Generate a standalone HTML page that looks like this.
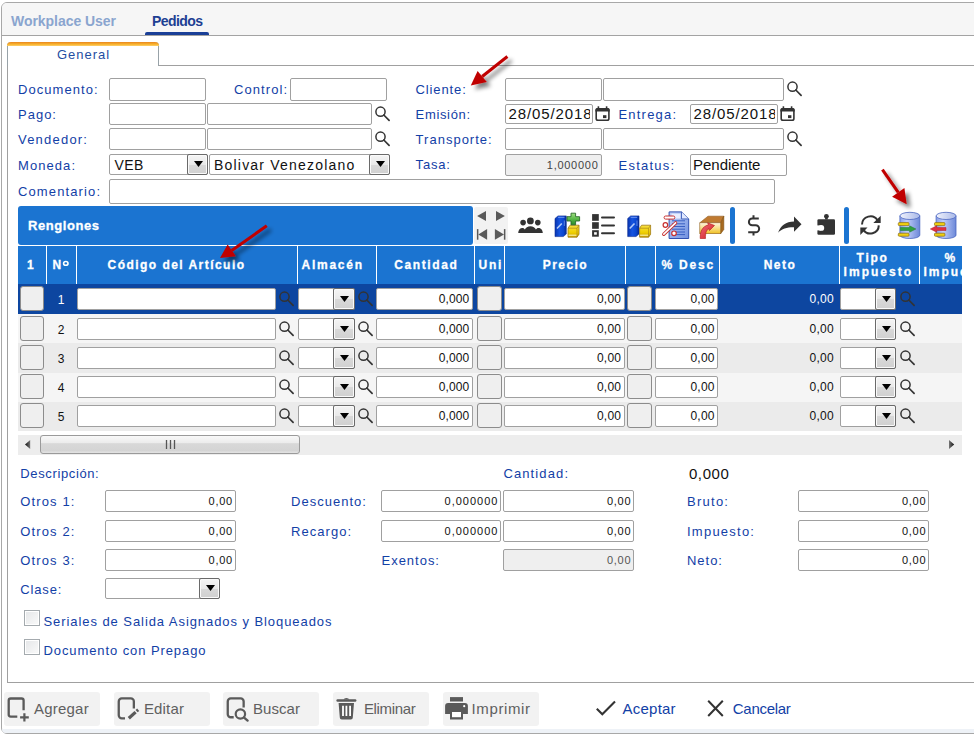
<!DOCTYPE html>
<html><head><meta charset="utf-8"><style>
html,body{margin:0;padding:0;width:974px;height:735px;overflow:hidden;background:#fff;font-family:"Liberation Sans",sans-serif}
.a{position:absolute}
.t{position:absolute;white-space:nowrap;line-height:20px}
.dd{box-sizing:border-box;border:1px solid #6a6a6a;border-radius:2px;box-shadow:inset 0 0 0 1px #fafafa;background:linear-gradient(#f4f4f4 0%,#e9e9e9 50%,#d8d8d8 52%,#d0d0d0 100%)}
</style></head><body>
<div class="a" style="left:1px;top:2px;width:1000px;height:732px;border:1px solid #a8a8a8;border-radius:6px;box-sizing:border-box;background:#fff"></div>
<div class="a" style="left:2px;top:3px;width:980px;height:32px;background:#f6f6f6;border-top-left-radius:5px"></div>
<div class="a" style="left:2px;top:35px;width:980px;height:1px;background:#a3a3a3"></div>
<div class="t" style="left:11.00px;top:11px;font-size:14px;color:#8aa5cf;letter-spacing:-0.046px;font-weight:bold;">Workplace User</div>
<div class="t" style="left:152.00px;top:11px;font-size:14px;color:#1d3f93;letter-spacing:-0.583px;font-weight:bold;">Pedidos</div>
<div class="a" style="left:145px;top:32px;width:64px;height:3px;background:#1a3f97;border-radius:2px 2px 0 0"></div>
<div class="a" style="left:7px;top:65px;width:1000px;height:618px;border-left:1px solid #a0a0a0;border-bottom:1px solid #a0a0a0;box-sizing:border-box"></div>
<div class="a" style="left:158px;top:65px;width:1000px;height:1px;background:#a0a0a0"></div>
<div class="a" style="left:7px;top:42px;width:152px;height:24px;border-left:1px solid #98a2a8;border-right:1px solid #98a2a8;box-sizing:border-box;background:#fff;border-radius:4px 4px 0 0"></div>
<div class="a" style="left:7px;top:42px;width:152px;height:4px;background:linear-gradient(#e8861e,#f9b530 60%,#fcd070);border-radius:4px 4px 0 0"></div>
<div class="t" style="left:57.00px;top:45px;font-size:13px;color:#1f4ea2;letter-spacing:0.967px;">General</div>
<div class="t" style="left:18.00px;top:80px;font-size:13px;color:#1240a6;letter-spacing:1.056px;">Documento:</div>
<div class="t" style="left:18.00px;top:105px;font-size:13px;color:#1240a6;letter-spacing:1.000px;">Pago:</div>
<div class="t" style="left:18.00px;top:130px;font-size:13px;color:#1240a6;letter-spacing:1.213px;">Vendedor:</div>
<div class="t" style="left:18.00px;top:156px;font-size:13px;color:#1240a6;letter-spacing:1.067px;">Moneda:</div>
<div class="t" style="left:18.00px;top:182px;font-size:13px;color:#1240a6;letter-spacing:1.120px;">Comentario:</div>
<div class="t" style="left:234.00px;top:80px;font-size:13px;color:#1240a6;letter-spacing:1.071px;">Control:</div>
<div class="t" style="left:415.60px;top:80px;font-size:13px;color:#1240a6;letter-spacing:0.871px;">Cliente:</div>
<div class="t" style="left:415.60px;top:105px;font-size:13px;color:#1240a6;letter-spacing:0.657px;">Emisión:</div>
<div class="t" style="left:415.60px;top:130px;font-size:13px;color:#1240a6;letter-spacing:1.010px;">Transporte:</div>
<div class="t" style="left:415.60px;top:155px;font-size:13px;color:#1240a6;letter-spacing:0.800px;">Tasa:</div>
<div class="t" style="left:618.50px;top:105px;font-size:13px;color:#1240a6;letter-spacing:1.200px;">Entrega:</div>
<div class="t" style="left:618.50px;top:156px;font-size:13px;color:#1240a6;letter-spacing:1.243px;">Estatus:</div>
<div class="a" style="left:109px;top:78px;width:97px;height:23px;border:1px solid #a0a0a0;border-radius:2px;background:#fff;box-sizing:border-box"></div>
<div class="a" style="left:290px;top:78px;width:97px;height:23px;border:1px solid #a0a0a0;border-radius:2px;background:#fff;box-sizing:border-box"></div>
<div class="a" style="left:109px;top:103px;width:97px;height:22px;border:1px solid #a0a0a0;border-radius:2px;background:#fff;box-sizing:border-box"></div>
<div class="a" style="left:207px;top:103px;width:165px;height:22px;border:1px solid #a0a0a0;border-radius:2px;background:#fff;box-sizing:border-box"></div>
<div class="a" style="left:374px;top:105px;width:18px;height:18px"><svg width="18" height="18" viewBox="0 0 18 18"><circle cx="6.5" cy="6.7" r="4.6" fill="none" stroke="#333" stroke-width="1.5"/><path d="M9.8 10L15.1 15.3" stroke="#333" stroke-width="1.7" stroke-linecap="round"/></svg></div>
<div class="a" style="left:109px;top:128px;width:97px;height:22px;border:1px solid #a0a0a0;border-radius:2px;background:#fff;box-sizing:border-box"></div>
<div class="a" style="left:207px;top:128px;width:165px;height:22px;border:1px solid #a0a0a0;border-radius:2px;background:#fff;box-sizing:border-box"></div>
<div class="a" style="left:374px;top:130px;width:18px;height:18px"><svg width="18" height="18" viewBox="0 0 18 18"><circle cx="6.5" cy="6.7" r="4.6" fill="none" stroke="#333" stroke-width="1.5"/><path d="M9.8 10L15.1 15.3" stroke="#333" stroke-width="1.7" stroke-linecap="round"/></svg></div>
<div class="a" style="left:109px;top:154px;width:99px;height:21px;border:1px solid #a0a0a0;border-radius:2px;background:#fff;box-sizing:border-box"></div>
<div class="a dd" style="left:187px;top:154px;width:21px;height:21px"><svg width="9" height="6" style="position:absolute;left:6px;top:6px"><path d="M0 0H9L4.5 6Z" fill="#000"/></svg></div>
<div class="a" style="left:209px;top:154px;width:181px;height:21px;border:1px solid #a0a0a0;border-radius:2px;background:#fff;box-sizing:border-box"></div>
<div class="a dd" style="left:369px;top:154px;width:21px;height:21px"><svg width="9" height="6" style="position:absolute;left:6px;top:6px"><path d="M0 0H9L4.5 6Z" fill="#000"/></svg></div>
<div class="t" style="left:114.60px;top:155px;font-size:14px;color:#111;letter-spacing:0.400px;">VEB</div>
<div class="t" style="left:214.00px;top:155px;font-size:14px;color:#111;letter-spacing:1.206px;">Bolivar Venezolano</div>
<div class="a" style="left:109px;top:179px;width:666px;height:25px;border:1px solid #a0a0a0;border-radius:2px;background:#fff;box-sizing:border-box"></div>
<div class="a" style="left:505px;top:78px;width:97px;height:23px;border:1px solid #a0a0a0;border-radius:2px;background:#fff;box-sizing:border-box"></div>
<div class="a" style="left:603px;top:78px;width:181px;height:23px;border:1px solid #a0a0a0;border-radius:2px;background:#fff;box-sizing:border-box"></div>
<div class="a" style="left:786px;top:80px;width:18px;height:18px"><svg width="18" height="18" viewBox="0 0 18 18"><circle cx="6.5" cy="6.7" r="4.6" fill="none" stroke="#333" stroke-width="1.5"/><path d="M9.8 10L15.1 15.3" stroke="#333" stroke-width="1.7" stroke-linecap="round"/></svg></div>
<div class="a" style="left:505px;top:104px;width:88px;height:20px;border:1px solid #a0a0a0;border-radius:2px;background:#fff;box-sizing:border-box"></div>
<div class="a" style="left:595px;top:106px"><svg width="16" height="17" viewBox="0 0 16 17"><rect x="1.2" y="2.8" width="12.7" height="11.5" rx="1.8" fill="none" stroke="#333" stroke-width="1.6"/><path d="M0.4 5.6V3.8A1.8 1.8 0 0 1 2.2 2H12.9A1.8 1.8 0 0 1 14.7 3.8V5.6Z" fill="#333"/><rect x="2.6" y="0.3" width="1.6" height="2" fill="#333"/><rect x="10.8" y="0.3" width="1.6" height="2" fill="#333"/><rect x="8" y="9.2" width="3.4" height="2.9" fill="#333"/></svg></div>
<div class="a" style="left:690px;top:104px;width:88px;height:20px;border:1px solid #a0a0a0;border-radius:2px;background:#fff;box-sizing:border-box"></div>
<div class="a" style="left:780px;top:106px"><svg width="16" height="17" viewBox="0 0 16 17"><rect x="1.2" y="2.8" width="12.7" height="11.5" rx="1.8" fill="none" stroke="#333" stroke-width="1.6"/><path d="M0.4 5.6V3.8A1.8 1.8 0 0 1 2.2 2H12.9A1.8 1.8 0 0 1 14.7 3.8V5.6Z" fill="#333"/><rect x="2.6" y="0.3" width="1.6" height="2" fill="#333"/><rect x="10.8" y="0.3" width="1.6" height="2" fill="#333"/><rect x="8" y="9.2" width="3.4" height="2.9" fill="#333"/></svg></div>
<div class="a" style="left:506px;top:105px;width:84px;height:18px;overflow:hidden">
<div class="t" style="left:2.60px;top:-1px;font-size:15px;color:#111;letter-spacing:0.878px;">28/05/2018</div>
</div>
<div class="a" style="left:691px;top:105px;width:84px;height:18px;overflow:hidden">
<div class="t" style="left:2.60px;top:-1px;font-size:15px;color:#111;letter-spacing:0.878px;">28/05/2018</div>
</div>
<div class="a" style="left:505px;top:128px;width:97px;height:22px;border:1px solid #a0a0a0;border-radius:2px;background:#fff;box-sizing:border-box"></div>
<div class="a" style="left:603px;top:128px;width:181px;height:22px;border:1px solid #a0a0a0;border-radius:2px;background:#fff;box-sizing:border-box"></div>
<div class="a" style="left:786px;top:130px;width:18px;height:18px"><svg width="18" height="18" viewBox="0 0 18 18"><circle cx="6.5" cy="6.7" r="4.6" fill="none" stroke="#333" stroke-width="1.5"/><path d="M9.8 10L15.1 15.3" stroke="#333" stroke-width="1.7" stroke-linecap="round"/></svg></div>
<div class="a" style="left:505px;top:154px;width:97px;height:22px;border:1px solid #a0a0a0;border-radius:2px;background:#efefef;box-sizing:border-box"></div>
<div class="t" style="left:546.80px;top:155px;font-size:11px;color:#444;letter-spacing:0.729px;">1,000000</div>
<div class="a" style="left:690px;top:154px;width:97px;height:22px;border:1px solid #a0a0a0;border-radius:2px;background:#fff;box-sizing:border-box"></div>
<div class="t" style="left:693.10px;top:155px;font-size:15px;color:#111;letter-spacing:-0.037px;">Pendiente</div>
<div class="a" style="left:18px;top:206px;width:455px;height:39px;background:#1b74d1;border-radius:3px"></div>
<div class="t" style="left:28.00px;top:216px;font-size:13px;color:#fff;letter-spacing:0.562px;font-weight:bold;-webkit-text-stroke:0.3px #fff">Renglones</div>
<div class="a" style="left:474px;top:207px;width:34px;height:37px;background:#f2f2f2;border-radius:2px"></div>
<svg class="a" style="left:474px;top:207px" width="35" height="37" viewBox="0 0 35 37"><path d="M3.1 8.9L12 3.9V13.9Z" fill="#5a5a5a"/><path d="M30.9 8.9L22 3.9V13.9Z" fill="#5a5a5a"/><rect x="2.9" y="22.1" width="1.5" height="10.6" fill="#5a5a5a"/><path d="M4.3 27.4L13.1 22.1V32.7Z" fill="#5a5a5a"/><rect x="29.9" y="22.1" width="1.5" height="10.6" fill="#5a5a5a"/><path d="M30 27.4L20.9 22.1V32.7Z" fill="#5a5a5a"/></svg>
<div class="a" style="left:730px;top:207px;width:5px;height:37px;background:#1b74d1;border-radius:3px"></div>
<div class="a" style="left:844px;top:207px;width:5px;height:37px;background:#1b74d1;border-radius:3px"></div>
<div class="a" style="left:18px;top:246px;width:944px;height:38px;background:#1b74d1"></div>
<div class="a" style="left:46px;top:246px;width:1px;height:38px;background:#fff"></div>
<div class="a" style="left:76px;top:246px;width:1px;height:38px;background:#fff"></div>
<div class="a" style="left:297px;top:246px;width:1px;height:38px;background:#fff"></div>
<div class="a" style="left:376px;top:246px;width:1px;height:38px;background:#fff"></div>
<div class="a" style="left:474px;top:246px;width:1px;height:38px;background:#fff"></div>
<div class="a" style="left:504px;top:246px;width:1px;height:38px;background:#fff"></div>
<div class="a" style="left:625px;top:246px;width:1px;height:38px;background:#fff"></div>
<div class="a" style="left:655px;top:246px;width:1px;height:38px;background:#fff"></div>
<div class="a" style="left:719px;top:246px;width:1px;height:38px;background:#fff"></div>
<div class="a" style="left:839px;top:246px;width:1px;height:38px;background:#fff"></div>
<div class="a" style="left:919px;top:246px;width:1px;height:38px;background:#fff"></div>
<div class="t" style="left:27.00px;top:255px;font-size:12px;color:#fff;font-weight:bold;-webkit-text-stroke:0.3px #fff">1</div>
<div class="t" style="left:52.50px;top:255px;font-size:12px;color:#fff;font-weight:bold;-webkit-text-stroke:0.3px #fff">N</div>
<svg class="a" style="left:60px;top:258px" width="12" height="10"><ellipse cx="5.8" cy="5.4" rx="2.2" ry="1.9" fill="none" stroke="#fff" stroke-width="1.6"/></svg>
<div class="t" style="left:107.50px;top:255px;font-size:12px;color:#fff;letter-spacing:1.461px;font-weight:bold;-webkit-text-stroke:0.3px #fff">Código del Artículo</div>
<div class="t" style="left:301.60px;top:255px;font-size:12px;color:#fff;letter-spacing:1.733px;font-weight:bold;-webkit-text-stroke:0.3px #fff">Almacén</div>
<div class="t" style="left:394.30px;top:255px;font-size:12px;color:#fff;letter-spacing:1.586px;font-weight:bold;-webkit-text-stroke:0.3px #fff">Cantidad</div>
<div class="t" style="left:478.40px;top:255px;font-size:12px;color:#fff;letter-spacing:1.850px;font-weight:bold;-webkit-text-stroke:0.3px #fff">Uni</div>
<div class="t" style="left:542.80px;top:255px;font-size:12px;color:#fff;letter-spacing:1.440px;font-weight:bold;-webkit-text-stroke:0.3px #fff">Precio</div>
<div class="t" style="left:661.50px;top:255px;font-size:12px;color:#fff;letter-spacing:1.800px;font-weight:bold;-webkit-text-stroke:0.3px #fff">% Desc</div>
<div class="t" style="left:763.70px;top:255px;font-size:12px;color:#fff;letter-spacing:1.500px;font-weight:bold;-webkit-text-stroke:0.3px #fff">Neto</div>
<div class="t" style="left:856.60px;top:248px;font-size:12px;color:#fff;letter-spacing:1.733px;font-weight:bold;-webkit-text-stroke:0.3px #fff">Tipo</div>
<div class="t" style="left:843.60px;top:262px;font-size:12px;color:#fff;letter-spacing:2.014px;font-weight:bold;-webkit-text-stroke:0.3px #fff">Impuesto</div>
<div class="a" style="left:920px;top:246px;width:42px;height:38px;overflow:hidden">
<div class="t" style="left:24.60px;top:2px;font-size:12px;color:#fff;font-weight:bold;-webkit-text-stroke:0.3px #fff">%</div>
<div class="t" style="left:3.40px;top:16px;font-size:12px;color:#fff;letter-spacing:2.014px;font-weight:bold;-webkit-text-stroke:0.3px #fff">Impuesto</div>
</div>
<div class="a" style="left:18px;top:284px;width:944px;height:30px;background:#0d46a0"></div>
<div class="a" style="left:20px;top:286px;width:24px;height:25px;background:#efefef;border:1px solid #8c8c8c;border-radius:3px;box-sizing:border-box"></div>
<div class="t" style="left:57.80px;top:290px;font-size:12px;color:#fff;">1</div>
<div class="a" style="left:77px;top:288px;width:199px;height:22px;border:1px solid #a0a0a0;border-radius:2px;background:#fff;box-sizing:border-box"></div>
<div class="a" style="left:278px;top:290px;width:18px;height:18px"><svg width="18" height="18" viewBox="0 0 18 18"><circle cx="6.5" cy="6.7" r="4.6" fill="none" stroke="#333" stroke-width="1.5"/><path d="M9.8 10L15.1 15.3" stroke="#333" stroke-width="1.7" stroke-linecap="round"/></svg></div>
<div class="a" style="left:298px;top:288px;width:57px;height:22px;border:1px solid #a0a0a0;border-radius:2px;background:#fff;box-sizing:border-box"></div>
<div class="a dd" style="left:333px;top:288px;width:22px;height:22px"><svg width="9" height="6" style="position:absolute;left:6px;top:7px"><path d="M0 0H9L4.5 6Z" fill="#000"/></svg></div>
<div class="a" style="left:357px;top:290px;width:18px;height:18px"><svg width="18" height="18" viewBox="0 0 18 18"><circle cx="6.5" cy="6.7" r="4.6" fill="none" stroke="#333" stroke-width="1.5"/><path d="M9.8 10L15.1 15.3" stroke="#333" stroke-width="1.7" stroke-linecap="round"/></svg></div>
<div class="a" style="left:376px;top:288px;width:97px;height:22px;border:1px solid #a0a0a0;border-radius:2px;background:#fff;box-sizing:border-box"></div>
<div class="t" style="left:438.80px;top:289px;font-size:12px;color:#111;letter-spacing:0.100px;">0,000</div>
<div class="a" style="left:477px;top:286px;width:25px;height:25px;background:#efefef;border:1px solid #8c8c8c;border-radius:3px;box-sizing:border-box"></div>
<div class="a" style="left:504px;top:288px;width:121px;height:22px;border:1px solid #a0a0a0;border-radius:2px;background:#fff;box-sizing:border-box"></div>
<div class="t" style="left:597.00px;top:289px;font-size:12px;color:#111;letter-spacing:0.200px;">0,00</div>
<div class="a" style="left:627px;top:286px;width:25px;height:25px;background:#efefef;border:1px solid #8c8c8c;border-radius:3px;box-sizing:border-box"></div>
<div class="a" style="left:655px;top:288px;width:63px;height:22px;border:1px solid #a0a0a0;border-radius:2px;background:#fff;box-sizing:border-box"></div>
<div class="t" style="left:690.50px;top:289px;font-size:12px;color:#111;letter-spacing:0.200px;">0,00</div>
<div class="t" style="left:809.60px;top:289px;font-size:12px;color:#fff;letter-spacing:0.200px;">0,00</div>
<div class="a" style="left:840px;top:288px;width:56px;height:22px;border:1px solid #a0a0a0;border-radius:2px;background:#fff;box-sizing:border-box"></div>
<div class="a dd" style="left:875px;top:288px;width:21px;height:22px"><svg width="9" height="6" style="position:absolute;left:6px;top:7px"><path d="M0 0H9L4.5 6Z" fill="#000"/></svg></div>
<div class="a" style="left:899px;top:290px;width:18px;height:18px"><svg width="18" height="18" viewBox="0 0 18 18"><circle cx="6.5" cy="6.7" r="4.6" fill="none" stroke="#333" stroke-width="1.5"/><path d="M9.8 10L15.1 15.3" stroke="#333" stroke-width="1.7" stroke-linecap="round"/></svg></div>
<div class="a" style="left:18px;top:314px;width:944px;height:29px;background:#f5f5f5"></div>
<div class="a" style="left:20px;top:316px;width:24px;height:25px;background:#efefef;border:1px solid #8c8c8c;border-radius:3px;box-sizing:border-box"></div>
<div class="t" style="left:57.80px;top:320px;font-size:12px;color:#111;">2</div>
<div class="a" style="left:77px;top:318px;width:199px;height:22px;border:1px solid #a0a0a0;border-radius:2px;background:#fff;box-sizing:border-box"></div>
<div class="a" style="left:278px;top:320px;width:18px;height:18px"><svg width="18" height="18" viewBox="0 0 18 18"><circle cx="6.5" cy="6.7" r="4.6" fill="none" stroke="#333" stroke-width="1.5"/><path d="M9.8 10L15.1 15.3" stroke="#333" stroke-width="1.7" stroke-linecap="round"/></svg></div>
<div class="a" style="left:298px;top:318px;width:57px;height:22px;border:1px solid #a0a0a0;border-radius:2px;background:#fff;box-sizing:border-box"></div>
<div class="a dd" style="left:333px;top:318px;width:22px;height:22px"><svg width="9" height="6" style="position:absolute;left:6px;top:7px"><path d="M0 0H9L4.5 6Z" fill="#000"/></svg></div>
<div class="a" style="left:357px;top:320px;width:18px;height:18px"><svg width="18" height="18" viewBox="0 0 18 18"><circle cx="6.5" cy="6.7" r="4.6" fill="none" stroke="#333" stroke-width="1.5"/><path d="M9.8 10L15.1 15.3" stroke="#333" stroke-width="1.7" stroke-linecap="round"/></svg></div>
<div class="a" style="left:376px;top:318px;width:97px;height:22px;border:1px solid #a0a0a0;border-radius:2px;background:#fff;box-sizing:border-box"></div>
<div class="t" style="left:438.80px;top:319px;font-size:12px;color:#111;letter-spacing:0.100px;">0,000</div>
<div class="a" style="left:477px;top:316px;width:25px;height:25px;background:#efefef;border:1px solid #8c8c8c;border-radius:3px;box-sizing:border-box"></div>
<div class="a" style="left:504px;top:318px;width:121px;height:22px;border:1px solid #a0a0a0;border-radius:2px;background:#fff;box-sizing:border-box"></div>
<div class="t" style="left:597.00px;top:319px;font-size:12px;color:#111;letter-spacing:0.200px;">0,00</div>
<div class="a" style="left:627px;top:316px;width:25px;height:25px;background:#efefef;border:1px solid #8c8c8c;border-radius:3px;box-sizing:border-box"></div>
<div class="a" style="left:655px;top:318px;width:63px;height:22px;border:1px solid #a0a0a0;border-radius:2px;background:#fff;box-sizing:border-box"></div>
<div class="t" style="left:690.50px;top:319px;font-size:12px;color:#111;letter-spacing:0.200px;">0,00</div>
<div class="t" style="left:809.60px;top:319px;font-size:12px;color:#111;letter-spacing:0.200px;">0,00</div>
<div class="a" style="left:840px;top:318px;width:56px;height:22px;border:1px solid #a0a0a0;border-radius:2px;background:#fff;box-sizing:border-box"></div>
<div class="a dd" style="left:875px;top:318px;width:21px;height:22px"><svg width="9" height="6" style="position:absolute;left:6px;top:7px"><path d="M0 0H9L4.5 6Z" fill="#000"/></svg></div>
<div class="a" style="left:899px;top:320px;width:18px;height:18px"><svg width="18" height="18" viewBox="0 0 18 18"><circle cx="6.5" cy="6.7" r="4.6" fill="none" stroke="#333" stroke-width="1.5"/><path d="M9.8 10L15.1 15.3" stroke="#333" stroke-width="1.7" stroke-linecap="round"/></svg></div>
<div class="a" style="left:18px;top:343px;width:944px;height:30px;background:#ebebeb"></div>
<div class="a" style="left:20px;top:345px;width:24px;height:25px;background:#efefef;border:1px solid #8c8c8c;border-radius:3px;box-sizing:border-box"></div>
<div class="t" style="left:57.80px;top:349px;font-size:12px;color:#111;">3</div>
<div class="a" style="left:77px;top:347px;width:199px;height:22px;border:1px solid #a0a0a0;border-radius:2px;background:#fff;box-sizing:border-box"></div>
<div class="a" style="left:278px;top:349px;width:18px;height:18px"><svg width="18" height="18" viewBox="0 0 18 18"><circle cx="6.5" cy="6.7" r="4.6" fill="none" stroke="#333" stroke-width="1.5"/><path d="M9.8 10L15.1 15.3" stroke="#333" stroke-width="1.7" stroke-linecap="round"/></svg></div>
<div class="a" style="left:298px;top:347px;width:57px;height:22px;border:1px solid #a0a0a0;border-radius:2px;background:#fff;box-sizing:border-box"></div>
<div class="a dd" style="left:333px;top:347px;width:22px;height:22px"><svg width="9" height="6" style="position:absolute;left:6px;top:7px"><path d="M0 0H9L4.5 6Z" fill="#000"/></svg></div>
<div class="a" style="left:357px;top:349px;width:18px;height:18px"><svg width="18" height="18" viewBox="0 0 18 18"><circle cx="6.5" cy="6.7" r="4.6" fill="none" stroke="#333" stroke-width="1.5"/><path d="M9.8 10L15.1 15.3" stroke="#333" stroke-width="1.7" stroke-linecap="round"/></svg></div>
<div class="a" style="left:376px;top:347px;width:97px;height:22px;border:1px solid #a0a0a0;border-radius:2px;background:#fff;box-sizing:border-box"></div>
<div class="t" style="left:438.80px;top:348px;font-size:12px;color:#111;letter-spacing:0.100px;">0,000</div>
<div class="a" style="left:477px;top:345px;width:25px;height:25px;background:#efefef;border:1px solid #8c8c8c;border-radius:3px;box-sizing:border-box"></div>
<div class="a" style="left:504px;top:347px;width:121px;height:22px;border:1px solid #a0a0a0;border-radius:2px;background:#fff;box-sizing:border-box"></div>
<div class="t" style="left:597.00px;top:348px;font-size:12px;color:#111;letter-spacing:0.200px;">0,00</div>
<div class="a" style="left:627px;top:345px;width:25px;height:25px;background:#efefef;border:1px solid #8c8c8c;border-radius:3px;box-sizing:border-box"></div>
<div class="a" style="left:655px;top:347px;width:63px;height:22px;border:1px solid #a0a0a0;border-radius:2px;background:#fff;box-sizing:border-box"></div>
<div class="t" style="left:690.50px;top:348px;font-size:12px;color:#111;letter-spacing:0.200px;">0,00</div>
<div class="t" style="left:809.60px;top:348px;font-size:12px;color:#111;letter-spacing:0.200px;">0,00</div>
<div class="a" style="left:840px;top:347px;width:56px;height:22px;border:1px solid #a0a0a0;border-radius:2px;background:#fff;box-sizing:border-box"></div>
<div class="a dd" style="left:875px;top:347px;width:21px;height:22px"><svg width="9" height="6" style="position:absolute;left:6px;top:7px"><path d="M0 0H9L4.5 6Z" fill="#000"/></svg></div>
<div class="a" style="left:899px;top:349px;width:18px;height:18px"><svg width="18" height="18" viewBox="0 0 18 18"><circle cx="6.5" cy="6.7" r="4.6" fill="none" stroke="#333" stroke-width="1.5"/><path d="M9.8 10L15.1 15.3" stroke="#333" stroke-width="1.7" stroke-linecap="round"/></svg></div>
<div class="a" style="left:18px;top:373px;width:944px;height:29px;background:#f5f5f5"></div>
<div class="a" style="left:20px;top:374px;width:24px;height:25px;background:#efefef;border:1px solid #8c8c8c;border-radius:3px;box-sizing:border-box"></div>
<div class="t" style="left:57.80px;top:378px;font-size:12px;color:#111;">4</div>
<div class="a" style="left:77px;top:376px;width:199px;height:22px;border:1px solid #a0a0a0;border-radius:2px;background:#fff;box-sizing:border-box"></div>
<div class="a" style="left:278px;top:378px;width:18px;height:18px"><svg width="18" height="18" viewBox="0 0 18 18"><circle cx="6.5" cy="6.7" r="4.6" fill="none" stroke="#333" stroke-width="1.5"/><path d="M9.8 10L15.1 15.3" stroke="#333" stroke-width="1.7" stroke-linecap="round"/></svg></div>
<div class="a" style="left:298px;top:376px;width:57px;height:22px;border:1px solid #a0a0a0;border-radius:2px;background:#fff;box-sizing:border-box"></div>
<div class="a dd" style="left:333px;top:376px;width:22px;height:22px"><svg width="9" height="6" style="position:absolute;left:6px;top:7px"><path d="M0 0H9L4.5 6Z" fill="#000"/></svg></div>
<div class="a" style="left:357px;top:378px;width:18px;height:18px"><svg width="18" height="18" viewBox="0 0 18 18"><circle cx="6.5" cy="6.7" r="4.6" fill="none" stroke="#333" stroke-width="1.5"/><path d="M9.8 10L15.1 15.3" stroke="#333" stroke-width="1.7" stroke-linecap="round"/></svg></div>
<div class="a" style="left:376px;top:376px;width:97px;height:22px;border:1px solid #a0a0a0;border-radius:2px;background:#fff;box-sizing:border-box"></div>
<div class="t" style="left:438.80px;top:377px;font-size:12px;color:#111;letter-spacing:0.100px;">0,000</div>
<div class="a" style="left:477px;top:374px;width:25px;height:25px;background:#efefef;border:1px solid #8c8c8c;border-radius:3px;box-sizing:border-box"></div>
<div class="a" style="left:504px;top:376px;width:121px;height:22px;border:1px solid #a0a0a0;border-radius:2px;background:#fff;box-sizing:border-box"></div>
<div class="t" style="left:597.00px;top:377px;font-size:12px;color:#111;letter-spacing:0.200px;">0,00</div>
<div class="a" style="left:627px;top:374px;width:25px;height:25px;background:#efefef;border:1px solid #8c8c8c;border-radius:3px;box-sizing:border-box"></div>
<div class="a" style="left:655px;top:376px;width:63px;height:22px;border:1px solid #a0a0a0;border-radius:2px;background:#fff;box-sizing:border-box"></div>
<div class="t" style="left:690.50px;top:377px;font-size:12px;color:#111;letter-spacing:0.200px;">0,00</div>
<div class="t" style="left:809.60px;top:377px;font-size:12px;color:#111;letter-spacing:0.200px;">0,00</div>
<div class="a" style="left:840px;top:376px;width:56px;height:22px;border:1px solid #a0a0a0;border-radius:2px;background:#fff;box-sizing:border-box"></div>
<div class="a dd" style="left:875px;top:376px;width:21px;height:22px"><svg width="9" height="6" style="position:absolute;left:6px;top:7px"><path d="M0 0H9L4.5 6Z" fill="#000"/></svg></div>
<div class="a" style="left:899px;top:378px;width:18px;height:18px"><svg width="18" height="18" viewBox="0 0 18 18"><circle cx="6.5" cy="6.7" r="4.6" fill="none" stroke="#333" stroke-width="1.5"/><path d="M9.8 10L15.1 15.3" stroke="#333" stroke-width="1.7" stroke-linecap="round"/></svg></div>
<div class="a" style="left:18px;top:402px;width:944px;height:29px;background:#ebebeb"></div>
<div class="a" style="left:20px;top:403px;width:24px;height:25px;background:#efefef;border:1px solid #8c8c8c;border-radius:3px;box-sizing:border-box"></div>
<div class="t" style="left:57.80px;top:407px;font-size:12px;color:#111;">5</div>
<div class="a" style="left:77px;top:405px;width:199px;height:22px;border:1px solid #a0a0a0;border-radius:2px;background:#fff;box-sizing:border-box"></div>
<div class="a" style="left:278px;top:407px;width:18px;height:18px"><svg width="18" height="18" viewBox="0 0 18 18"><circle cx="6.5" cy="6.7" r="4.6" fill="none" stroke="#333" stroke-width="1.5"/><path d="M9.8 10L15.1 15.3" stroke="#333" stroke-width="1.7" stroke-linecap="round"/></svg></div>
<div class="a" style="left:298px;top:405px;width:57px;height:22px;border:1px solid #a0a0a0;border-radius:2px;background:#fff;box-sizing:border-box"></div>
<div class="a dd" style="left:333px;top:405px;width:22px;height:22px"><svg width="9" height="6" style="position:absolute;left:6px;top:7px"><path d="M0 0H9L4.5 6Z" fill="#000"/></svg></div>
<div class="a" style="left:357px;top:407px;width:18px;height:18px"><svg width="18" height="18" viewBox="0 0 18 18"><circle cx="6.5" cy="6.7" r="4.6" fill="none" stroke="#333" stroke-width="1.5"/><path d="M9.8 10L15.1 15.3" stroke="#333" stroke-width="1.7" stroke-linecap="round"/></svg></div>
<div class="a" style="left:376px;top:405px;width:97px;height:22px;border:1px solid #a0a0a0;border-radius:2px;background:#fff;box-sizing:border-box"></div>
<div class="t" style="left:438.80px;top:406px;font-size:12px;color:#111;letter-spacing:0.100px;">0,000</div>
<div class="a" style="left:477px;top:403px;width:25px;height:25px;background:#efefef;border:1px solid #8c8c8c;border-radius:3px;box-sizing:border-box"></div>
<div class="a" style="left:504px;top:405px;width:121px;height:22px;border:1px solid #a0a0a0;border-radius:2px;background:#fff;box-sizing:border-box"></div>
<div class="t" style="left:597.00px;top:406px;font-size:12px;color:#111;letter-spacing:0.200px;">0,00</div>
<div class="a" style="left:627px;top:403px;width:25px;height:25px;background:#efefef;border:1px solid #8c8c8c;border-radius:3px;box-sizing:border-box"></div>
<div class="a" style="left:655px;top:405px;width:63px;height:22px;border:1px solid #a0a0a0;border-radius:2px;background:#fff;box-sizing:border-box"></div>
<div class="t" style="left:690.50px;top:406px;font-size:12px;color:#111;letter-spacing:0.200px;">0,00</div>
<div class="t" style="left:809.60px;top:406px;font-size:12px;color:#111;letter-spacing:0.200px;">0,00</div>
<div class="a" style="left:840px;top:405px;width:56px;height:22px;border:1px solid #a0a0a0;border-radius:2px;background:#fff;box-sizing:border-box"></div>
<div class="a dd" style="left:875px;top:405px;width:21px;height:22px"><svg width="9" height="6" style="position:absolute;left:6px;top:7px"><path d="M0 0H9L4.5 6Z" fill="#000"/></svg></div>
<div class="a" style="left:899px;top:407px;width:18px;height:18px"><svg width="18" height="18" viewBox="0 0 18 18"><circle cx="6.5" cy="6.7" r="4.6" fill="none" stroke="#333" stroke-width="1.5"/><path d="M9.8 10L15.1 15.3" stroke="#333" stroke-width="1.7" stroke-linecap="round"/></svg></div>
<div class="a" style="left:18px;top:435px;width:944px;height:20px;background:#ededed"></div>
<svg class="a" style="left:24px;top:440px" width="8" height="10"><defs><linearGradient id="sa"><stop offset="0" stop-color="#111"/><stop offset="1" stop-color="#777"/></linearGradient></defs><path d="M6.2 0V9L1 4.5Z" fill="url(#sa)"/></svg>
<svg class="a" style="left:948px;top:440px" width="8" height="10"><defs><linearGradient id="sb"><stop offset="0" stop-color="#777"/><stop offset="1" stop-color="#111"/></linearGradient></defs><path d="M1 0V9L6.2 4.5Z" fill="url(#sb)"/></svg>
<div class="a" style="left:40px;top:435px;width:260px;height:19px;background:linear-gradient(#f8f8f8,#ececec 40%,#d8d8d8 45%,#d4d4d4 85%,#e4e4e4);border:1px solid #9a9a9a;border-radius:3px;box-sizing:border-box"></div>
<svg class="a" style="left:165px;top:440px" width="11" height="9"><path d="M1.5 0V9M5.5 0V9M9.5 0V9" stroke="#555" stroke-width="1.3"/></svg>
<div class="t" style="left:20.30px;top:464px;font-size:13px;color:#1240a6;letter-spacing:0.627px;">Descripción:</div>
<div class="t" style="left:503.40px;top:464px;font-size:13px;color:#1240a6;letter-spacing:1.125px;">Cantidad:</div>
<div class="t" style="left:688.90px;top:464px;font-size:15px;color:#111;letter-spacing:0.625px;">0,000</div>
<div class="t" style="left:20.30px;top:492px;font-size:13px;color:#1240a6;letter-spacing:1.114px;">Otros 1:</div>
<div class="a" style="left:105px;top:490px;width:131px;height:22px;border:1px solid #a0a0a0;border-radius:2px;background:#fff;box-sizing:border-box"></div>
<div class="t" style="left:208.60px;top:491px;font-size:11px;color:#111;letter-spacing:0.733px;">0,00</div>
<div class="t" style="left:20.30px;top:522px;font-size:13px;color:#1240a6;letter-spacing:1.114px;">Otros 2:</div>
<div class="a" style="left:105px;top:520px;width:131px;height:22px;border:1px solid #a0a0a0;border-radius:2px;background:#fff;box-sizing:border-box"></div>
<div class="t" style="left:208.60px;top:521px;font-size:11px;color:#111;letter-spacing:0.733px;">0,00</div>
<div class="t" style="left:20.30px;top:551px;font-size:13px;color:#1240a6;letter-spacing:1.114px;">Otros 3:</div>
<div class="a" style="left:105px;top:549px;width:131px;height:22px;border:1px solid #a0a0a0;border-radius:2px;background:#fff;box-sizing:border-box"></div>
<div class="t" style="left:208.60px;top:550px;font-size:11px;color:#111;letter-spacing:0.733px;">0,00</div>
<div class="t" style="left:20.30px;top:580px;font-size:13px;color:#1240a6;letter-spacing:0.840px;">Clase:</div>
<div class="a" style="left:105px;top:578px;width:115px;height:21px;border:1px solid #a0a0a0;border-radius:2px;background:#fff;box-sizing:border-box"></div>
<div class="a dd" style="left:199px;top:578px;width:21px;height:21px"><svg width="9" height="6" style="position:absolute;left:6px;top:6px"><path d="M0 0H9L4.5 6Z" fill="#000"/></svg></div>
<div class="t" style="left:291.00px;top:492px;font-size:13px;color:#1240a6;letter-spacing:1.022px;">Descuento:</div>
<div class="t" style="left:291.00px;top:522px;font-size:13px;color:#1240a6;letter-spacing:1.043px;">Recargo:</div>
<div class="t" style="left:381.50px;top:551px;font-size:13px;color:#1240a6;letter-spacing:0.986px;">Exentos:</div>
<div class="a" style="left:381px;top:490px;width:120px;height:22px;border:1px solid #a0a0a0;border-radius:2px;background:#fff;box-sizing:border-box"></div>
<div class="t" style="left:444.50px;top:491px;font-size:11px;color:#111;letter-spacing:1.014px;">0,000000</div>
<div class="a" style="left:503px;top:490px;width:131px;height:22px;border:1px solid #a0a0a0;border-radius:2px;background:#fff;box-sizing:border-box"></div>
<div class="t" style="left:606.90px;top:491px;font-size:11px;color:#111;letter-spacing:0.733px;">0,00</div>
<div class="a" style="left:381px;top:520px;width:120px;height:22px;border:1px solid #a0a0a0;border-radius:2px;background:#fff;box-sizing:border-box"></div>
<div class="t" style="left:444.50px;top:521px;font-size:11px;color:#111;letter-spacing:1.014px;">0,000000</div>
<div class="a" style="left:503px;top:520px;width:131px;height:22px;border:1px solid #a0a0a0;border-radius:2px;background:#fff;box-sizing:border-box"></div>
<div class="t" style="left:606.90px;top:521px;font-size:11px;color:#111;letter-spacing:0.733px;">0,00</div>
<div class="a" style="left:503px;top:549px;width:131px;height:22px;border:1px solid #a0a0a0;border-radius:2px;background:#efefef;box-sizing:border-box"></div>
<div class="t" style="left:606.90px;top:550px;font-size:11px;color:#555;letter-spacing:0.733px;">0,00</div>
<div class="t" style="left:687.00px;top:492px;font-size:13px;color:#1240a6;letter-spacing:1.260px;">Bruto:</div>
<div class="t" style="left:687.00px;top:522px;font-size:13px;color:#1240a6;letter-spacing:1.237px;">Impuesto:</div>
<div class="t" style="left:687.00px;top:551px;font-size:13px;color:#1240a6;letter-spacing:0.975px;">Neto:</div>
<div class="a" style="left:798px;top:490px;width:131px;height:22px;border:1px solid #a0a0a0;border-radius:2px;background:#fff;box-sizing:border-box"></div>
<div class="t" style="left:901.90px;top:491px;font-size:11px;color:#111;letter-spacing:0.733px;">0,00</div>
<div class="a" style="left:798px;top:520px;width:131px;height:22px;border:1px solid #a0a0a0;border-radius:2px;background:#fff;box-sizing:border-box"></div>
<div class="t" style="left:901.90px;top:521px;font-size:11px;color:#111;letter-spacing:0.733px;">0,00</div>
<div class="a" style="left:798px;top:549px;width:131px;height:22px;border:1px solid #a0a0a0;border-radius:2px;background:#fff;box-sizing:border-box"></div>
<div class="t" style="left:901.90px;top:550px;font-size:11px;color:#111;letter-spacing:0.733px;">0,00</div>
<div class="a" style="left:24px;top:610px;width:16px;height:16px;background:linear-gradient(135deg,#e4e6e8,#fafafa);border:1px solid #a4aaae;box-shadow:inset 0 0 0 1px #fff;box-sizing:border-box"></div>
<div class="a" style="left:24px;top:639px;width:16px;height:16px;background:linear-gradient(135deg,#e4e6e8,#fafafa);border:1px solid #a4aaae;box-shadow:inset 0 0 0 1px #fff;box-sizing:border-box"></div>
<div class="t" style="left:43.50px;top:612px;font-size:13px;color:#1240a6;letter-spacing:0.930px;">Seriales de Salida Asignados y Bloqueados</div>
<div class="t" style="left:43.50px;top:641px;font-size:13px;color:#1240a6;letter-spacing:0.910px;">Documento con Prepago</div>
<div class="a" style="left:2px;top:729px;width:980px;height:4px;background:#eef2f7;border-bottom-left-radius:5px"></div>
<div class="a" style="left:4px;top:692px;width:96px;height:34px;background:#f2f2f2;border-radius:3px"></div>
<div class="a" style="left:114px;top:692px;width:96px;height:34px;background:#f2f2f2;border-radius:3px"></div>
<div class="a" style="left:223px;top:692px;width:96px;height:34px;background:#f2f2f2;border-radius:3px"></div>
<div class="a" style="left:333px;top:692px;width:96px;height:34px;background:#f2f2f2;border-radius:3px"></div>
<div class="a" style="left:443px;top:692px;width:96px;height:34px;background:#f2f2f2;border-radius:3px"></div>
<div class="t" style="left:33.90px;top:699px;font-size:15px;color:#606060;letter-spacing:0.233px;">Agregar</div>
<div class="t" style="left:143.90px;top:699px;font-size:15px;color:#606060;letter-spacing:0.160px;">Editar</div>
<div class="t" style="left:253.00px;top:699px;font-size:15px;color:#606060;letter-spacing:0.060px;">Buscar</div>
<div class="t" style="left:363.90px;top:699px;font-size:15px;color:#606060;letter-spacing:-0.314px;">Eliminar</div>
<div class="t" style="left:471.60px;top:699px;font-size:15px;color:#606060;letter-spacing:0.600px;">Imprimir</div>
<div class="t" style="left:622.60px;top:699px;font-size:15px;color:#1240a6;letter-spacing:0.217px;">Aceptar</div>
<div class="t" style="left:732.80px;top:699px;font-size:15px;color:#1240a6;letter-spacing:-0.286px;">Cancelar</div>
<svg class="a" style="left:514px;top:210px" width="32" height="28" viewBox="0 0 32 28"><circle cx="9.1" cy="12.6" r="2.8" fill="#333"/><circle cx="16.4" cy="10.9" r="3.4" fill="#333"/><circle cx="23.8" cy="12.6" r="2.8" fill="#333"/><path d="M4.2 22.9C4.2 19.8 6.2 17.9 8.4 17.9C9.6 17.9 10.4 18.6 10.9 19.6C11.6 17.6 13.8 16.3 16.4 16.3C19 16.3 21.2 17.6 21.9 19.6C22.4 18.6 23.2 17.9 24.4 17.9C26.6 17.9 28.8 19.8 28.8 22.9Z" fill="#333"/></svg>
<svg class="a" style="left:550px;top:208px" width="32" height="32" viewBox="0 0 32 32"><defs><linearGradient id="bb" x1="0" y1="0" x2="1" y2="0"><stop offset="0" stop-color="#0836b0"/><stop offset=".4" stop-color="#1654e0"/><stop offset=".75" stop-color="#0a46d0"/><stop offset="1" stop-color="#062a90"/></linearGradient><linearGradient id="yb" x1="0" y1="0" x2="0" y2="1"><stop offset="0" stop-color="#f8e040"/><stop offset=".6" stop-color="#f0d000"/><stop offset="1" stop-color="#c8a000"/></linearGradient><linearGradient id="gp" x1="0" y1="0" x2="0" y2="1"><stop offset="0" stop-color="#a0e080"/><stop offset=".5" stop-color="#58b848"/><stop offset="1" stop-color="#2a8a2a"/></linearGradient></defs><path d="M5 10.5L8 7.9H16.3V26L13.3 28.6H5Z" fill="url(#bb)" stroke="#0a2a90" stroke-width=".6"/><path d="M8 9.3H14.5" stroke="#9ab8ff" stroke-width="1" opacity=".7"/><path d="M7 20.5L11.8 15.5" stroke="#d0e0ff" stroke-width="1.6" opacity=".85"/><path d="M14.3 12.5V18" stroke="#8fb0ff" stroke-width="1" opacity=".6"/><path d="M18 20.2L20 17.2H29V26.2L27 29.2H18Z" fill="url(#yb)" stroke="#a07818" stroke-width=".8"/><path d="M18 20.2H27L29 17.2M27 20.2V29.2" stroke="#a07818" stroke-width=".6" fill="none"/><path d="M18.5 27.2H26.5" stroke="#fff8c0" stroke-width="1"/><path d="M21 5.2H25.6V8.7H29.6V13H25.6V16.8H21V13H17V8.7H21Z" fill="url(#gp)" stroke="#2a6a2a" stroke-width=".9"/></svg>
<svg class="a" style="left:588px;top:210px" width="32" height="30" viewBox="0 0 32 30"><rect x="4.1" y="4.1" width="6.7" height="6.7" fill="#333"/><rect x="4.1" y="12.2" width="6.7" height="6.6" fill="#333"/><rect x="5.1" y="21.2" width="4.7" height="4.5" fill="none" stroke="#333" stroke-width="2"/><path d="M14 7.6H26M14 15.4H26M14 23.3H26" stroke="#333" stroke-width="2" stroke-linecap="round"/></svg>
<svg class="a" style="left:622px;top:208px" width="32" height="32" viewBox="0 0 32 32"><defs><linearGradient id="bb2" x1="0" y1="0" x2="1" y2="0"><stop offset="0" stop-color="#0836b0"/><stop offset=".4" stop-color="#1654e0"/><stop offset=".75" stop-color="#0a46d0"/><stop offset="1" stop-color="#062a90"/></linearGradient><linearGradient id="yb2" x1="0" y1="0" x2="0" y2="1"><stop offset="0" stop-color="#f8e040"/><stop offset=".6" stop-color="#f0d000"/><stop offset="1" stop-color="#c8a000"/></linearGradient><linearGradient id="gp2" x1="0" y1="0" x2="0" y2="1"><stop offset="0" stop-color="#a0e080"/><stop offset=".5" stop-color="#58b848"/><stop offset="1" stop-color="#2a8a2a"/></linearGradient></defs><path d="M5.7 10.5L8.7 7.9H17.0V26L14.0 28.6H5.7Z" fill="url(#bb2)" stroke="#0a2a90" stroke-width=".6"/><path d="M8.7 9.3H15.2" stroke="#9ab8ff" stroke-width="1" opacity=".7"/><path d="M7.7 20.5L12.5 15.5" stroke="#d0e0ff" stroke-width="1.6" opacity=".85"/><path d="M15.0 12.5V18" stroke="#8fb0ff" stroke-width="1" opacity=".6"/><path d="M17.6 20.200000000000006L19.6 17.200000000000006H28.6V26.200000000000006L26.6 29.200000000000006H17.6Z" fill="url(#yb2)" stroke="#a07818" stroke-width=".8"/><path d="M17.6 20.200000000000006H26.6L28.6 17.200000000000006M26.6 20.200000000000006V29.200000000000006" stroke="#a07818" stroke-width=".6" fill="none"/><path d="M18.1 27.200000000000006H26.1" stroke="#fff8c0" stroke-width="1"/></svg>
<svg class="a" style="left:658px;top:208px" width="32" height="32" viewBox="0 0 32 32"><defs><linearGradient id="dg" x1="0" y1="0" x2="1" y2="1"><stop offset="0" stop-color="#c0d0f8"/><stop offset="1" stop-color="#7090e0"/></linearGradient></defs><path d="M11.1 3.9H23.5L30.7 10.9V30.5H11.1Z" fill="url(#dg)" stroke="#3050b0" stroke-width="1"/><path d="M23.5 3.9V10.9H30.7" fill="#e0e8ff" stroke="#3050b0" stroke-width=".8"/><rect x="13.5" y="5.6" width="9" height="5" fill="#eef3ff" opacity=".9"/><path d="M14 12.8H27M14 15.8H27M14 18.5H27M14 21.2H27M14 24H27M14 26.6H27" stroke="#3058c0" stroke-width=".9"/><rect x="6.1" y="8" width="10.7" height="3.1" rx="1.5" fill="#fff" stroke="#c83030" stroke-width="1"/><path d="M5.8 26.2L17.6 14.9" stroke="#c83030" stroke-width="3.4" stroke-linecap="round"/><path d="M5.8 26.2L17.6 14.9" stroke="#fff" stroke-width="1.6" stroke-linecap="round"/><circle cx="7.4" cy="17" r="2.3" fill="#fff" stroke="#c83030" stroke-width="1.2"/><circle cx="16" cy="25.3" r="2.3" fill="#fff" stroke="#c83030" stroke-width="1.2"/></svg>
<svg class="a" style="left:695px;top:208px" width="32" height="32" viewBox="0 0 32 32"><defs><linearGradient id="bf" x1="0" y1="0" x2="0" y2="1"><stop offset="0" stop-color="#fff4e0"/><stop offset=".45" stop-color="#f8e090"/><stop offset="1" stop-color="#f0c020"/></linearGradient><linearGradient id="ra" x1="0" y1="0" x2="1" y2="1"><stop offset="0" stop-color="#f07080"/><stop offset="1" stop-color="#d01818"/></linearGradient></defs><path d="M4.8 14.8L13 8.2H28.8L25.7 14.8Z" fill="#c07a30" stroke="#905a20" stroke-width=".6"/><path d="M25.7 14.8L28.8 8.2V21.5L25.7 25.7Z" fill="#a86a20" stroke="#805010" stroke-width=".6"/><rect x="4.8" y="14.8" width="20.9" height="10.9" fill="url(#bf)" stroke="#906020" stroke-width=".6"/><path d="M5.2 30.5C5 24 7 18.5 13.5 16.8L12.6 14.8L19.5 17.5L14.5 22.5L14 20.8C11 21.8 10.4 25.5 10.5 30.5Z" fill="url(#ra)" stroke="#b01818" stroke-width=".6"/></svg>
<svg class="a" style="left:742px;top:210px" width="64" height="30" viewBox="0 0 64 30"><path d="M16.8 8.6H10.2A3.3 3.3 0 0 0 10.2 15.2H13.6A3.55 3.55 0 0 1 13.6 22.3H6.2M11.5 5.3V8.6M11.5 22.3V25.6" fill="none" stroke="#333" stroke-width="2"/><path d="M36.1 22.7C38.5 15.5 44 11.8 52 11.5V6.6L59.5 14.3L52 21.8V17.3C45 17.2 40 18.8 36.1 22.7Z" fill="#333"/></svg>
<svg class="a" style="left:812px;top:208px" width="74" height="32" viewBox="0 0 74 32"><rect x="5.4" y="11.2" width="17.6" height="15.6" rx="1.2" fill="#333"/><circle cx="14.4" cy="8.3" r="2.4" fill="#333"/><rect x="13.1" y="8.5" width="2.6" height="3" fill="#333"/><circle cx="9.3" cy="19.9" r="2.9" fill="#fff"/><rect x="4.5" y="17.4" width="4.8" height="5" fill="#fff"/><path d="M50 16.6A8.4 8.4 0 0 1 65.6 12.4M66.8 17.4A8.4 8.4 0 0 1 51.3 21.6" fill="none" stroke="#333" stroke-width="2"/><path d="M68.7 7.7V14.9H61.3Z" fill="#333"/><path d="M48.3 26.9V19.6H55.5Z" fill="#333"/></svg>
<svg class="a" style="left:893px;top:208px" width="35" height="34" viewBox="0 0 35 34"><defs><linearGradient id="cy" x1="0" y1="0" x2="1" y2="0"><stop offset="0" stop-color="#8aa0e8"/><stop offset=".35" stop-color="#c0ccf8"/><stop offset="1" stop-color="#6c88d8"/></linearGradient><linearGradient id="ct" x1="0" y1="0" x2="1" y2="0"><stop offset="0" stop-color="#f0f2fc"/><stop offset="1" stop-color="#a8b8e8"/></linearGradient></defs><path d="M6.9 7.9V27.2A9.95 3.3 0 0 0 26.799999999999997 27.2V7.9Z" fill="url(#cy)" stroke="#4a66c0" stroke-width=".8"/><ellipse cx="16.9" cy="7.9" rx="9.95" ry="3.6" fill="url(#ct)" stroke="#4a66c0" stroke-width=".8"/><rect x="5.3" y="14.6" width="10.7" height="3" rx=".8" fill="#f0d010" stroke="#8a6a10" stroke-width=".7"/><rect x="5.3" y="25.2" width="10.7" height="3" rx=".8" fill="#f0d010" stroke="#8a6a10" stroke-width=".7"/><path d="M7.4 19.5H16.6V17.8L22.9 21L16.6 24.2V22.5H7.4Z" fill="#30a040" stroke="#207830" stroke-width=".5"/></svg>
<svg class="a" style="left:925px;top:208px" width="35" height="34" viewBox="0 0 35 34"><defs><linearGradient id="cy2" x1="0" y1="0" x2="1" y2="0"><stop offset="0" stop-color="#8aa0e8"/><stop offset=".35" stop-color="#c0ccf8"/><stop offset="1" stop-color="#6c88d8"/></linearGradient><linearGradient id="ct2" x1="0" y1="0" x2="1" y2="0"><stop offset="0" stop-color="#f0f2fc"/><stop offset="1" stop-color="#a8b8e8"/></linearGradient></defs><path d="M11.1 7.9V27.2A9.95 3.3 0 0 0 31.0 27.2V7.9Z" fill="url(#cy2)" stroke="#4a66c0" stroke-width=".8"/><ellipse cx="21.1" cy="7.9" rx="9.95" ry="3.6" fill="url(#ct2)" stroke="#4a66c0" stroke-width=".8"/><rect x="9.5" y="14.6" width="10.4" height="3" rx=".8" fill="#f0d010" stroke="#8a6a10" stroke-width=".7"/><rect x="9.5" y="25.2" width="10.4" height="3" rx=".8" fill="#f0d010" stroke="#8a6a10" stroke-width=".7"/><path d="M21 19.5H11.7V17.8L5.3 21L11.7 24.2V22.5H21Z" fill="#e03040" stroke="#b02030" stroke-width=".5"/></svg>
<svg class="a" style="left:0px;top:688px" width="40" height="40" viewBox="0 0 40 40"><path d="M23.6 22.3V12.5A2 2 0 0 0 21.6 10.5H10.7A2 2 0 0 0 8.7 12.5V26.6A2 2 0 0 0 10.7 28.6H17.3" fill="none" stroke="#5a5a5a" stroke-width="2.3"/><path d="M20.1 29.4H28.8M24.4 25.2V33.4" stroke="#5a5a5a" stroke-width="2.2"/></svg>
<svg class="a" style="left:112px;top:690px" width="40" height="40" viewBox="0 0 40 40"><path d="M21.85 18.6V11.4A3 3 0 0 0 18.85 8.4H9.75A3 3 0 0 0 6.75 11.4V25.3A3 3 0 0 0 9.75 28.3H13" fill="none" stroke="#5a5a5a" stroke-width="2.3"/><path d="M16.8 28.3L23.6 22.1" stroke="#5a5a5a" stroke-width="3.2"/><path d="M24.6 21.1L26.2 19.7" stroke="#5a5a5a" stroke-width="3.2"/></svg>
<svg class="a" style="left:222px;top:690px" width="40" height="40" viewBox="0 0 40 40"><path d="M21.65 17.6V11.45A3 3 0 0 0 18.65 8.45H8.75A3 3 0 0 0 5.75 11.45V24.25A3 3 0 0 0 8.75 27.25H11.7" fill="none" stroke="#5a5a5a" stroke-width="2.3"/><circle cx="18.4" cy="24" r="4.7" fill="none" stroke="#5a5a5a" stroke-width="2.2"/><path d="M21.8 27.4L25.6 30.6" stroke="#5a5a5a" stroke-width="2.4" stroke-linecap="round"/></svg>
<svg class="a" style="left:332px;top:690px" width="40" height="40" viewBox="0 0 40 40"><path d="M5.6 10.5H23.2" stroke="#5a5a5a" stroke-width="2.4" stroke-linecap="round"/><path d="M11.5 9.5Q12 8 14.4 8Q16.8 8 17.3 9.5Z" fill="#5a5a5a"/><path d="M6.6 13H22L20.8 27.6A2 2 0 0 1 18.8 29.6H9.8A2 2 0 0 1 7.8 27.6Z" fill="#5a5a5a"/><path d="M11 15.7V25.9M14.4 15.7V25.9M18.1 15.7V25.9" stroke="#fff" stroke-width="1.8"/></svg>
<svg class="a" style="left:440px;top:690px" width="40" height="40" viewBox="0 0 40 40"><rect x="10" y="7.1" width="13" height="4.4" fill="#5a5a5a"/><path d="M5.1 24V16A3 3 0 0 1 8.1 13H24.9A3 3 0 0 1 27.9 16V24H23V29.6H10V24Z" fill="#5a5a5a"/><rect x="12" y="22" width="9" height="5.2" fill="#fff"/><circle cx="24.2" cy="16.2" r="1.1" fill="#fff"/></svg>
<svg class="a" style="left:590px;top:694px" width="40" height="30" viewBox="0 0 40 30"><path d="M6.8 14.8L12.3 20.3L25 7.6" fill="none" stroke="#333" stroke-width="2.1"/></svg>
<svg class="a" style="left:700px;top:694px" width="40" height="30" viewBox="0 0 40 30"><path d="M8.2 6.8L22.8 22M22.8 6.8L8.2 22" fill="none" stroke="#333" stroke-width="2"/></svg>
<svg class="a" style="left:0;top:0" width="974" height="735"><defs><filter id="sh" x="-50%" y="-50%" width="200%" height="200%"><feGaussianBlur in="SourceAlpha" stdDeviation="2.3"/><feOffset dx="4" dy="4" result="b"/><feComponentTransfer><feFuncA type="linear" slope="0.5"/></feComponentTransfer><feMerge><feMergeNode/><feMergeNode in="SourceGraphic"/></feMerge></filter></defs><g filter="url(#sh)"><path d="M507.4 56.5L482.20000000000005 76.5" stroke="#c00000" stroke-width="3.1" stroke-linecap="butt"/><path d="M470.8 85.4L477.6 71L486.8 82Z" fill="#c00000"/><path d="M266.8 225.8L231.75 250.4" stroke="#c00000" stroke-width="3.1" stroke-linecap="butt"/><path d="M220 258.1L227.6 244.5L235.9 256.3Z" fill="#c00000"/><path d="M882.4 169.7L898.25 192.35" stroke="#c00000" stroke-width="3.1" stroke-linecap="butt"/><path d="M906.7 204.2L892.1 196.7L904.4 188Z" fill="#c00000"/></g></svg>
</body></html>
